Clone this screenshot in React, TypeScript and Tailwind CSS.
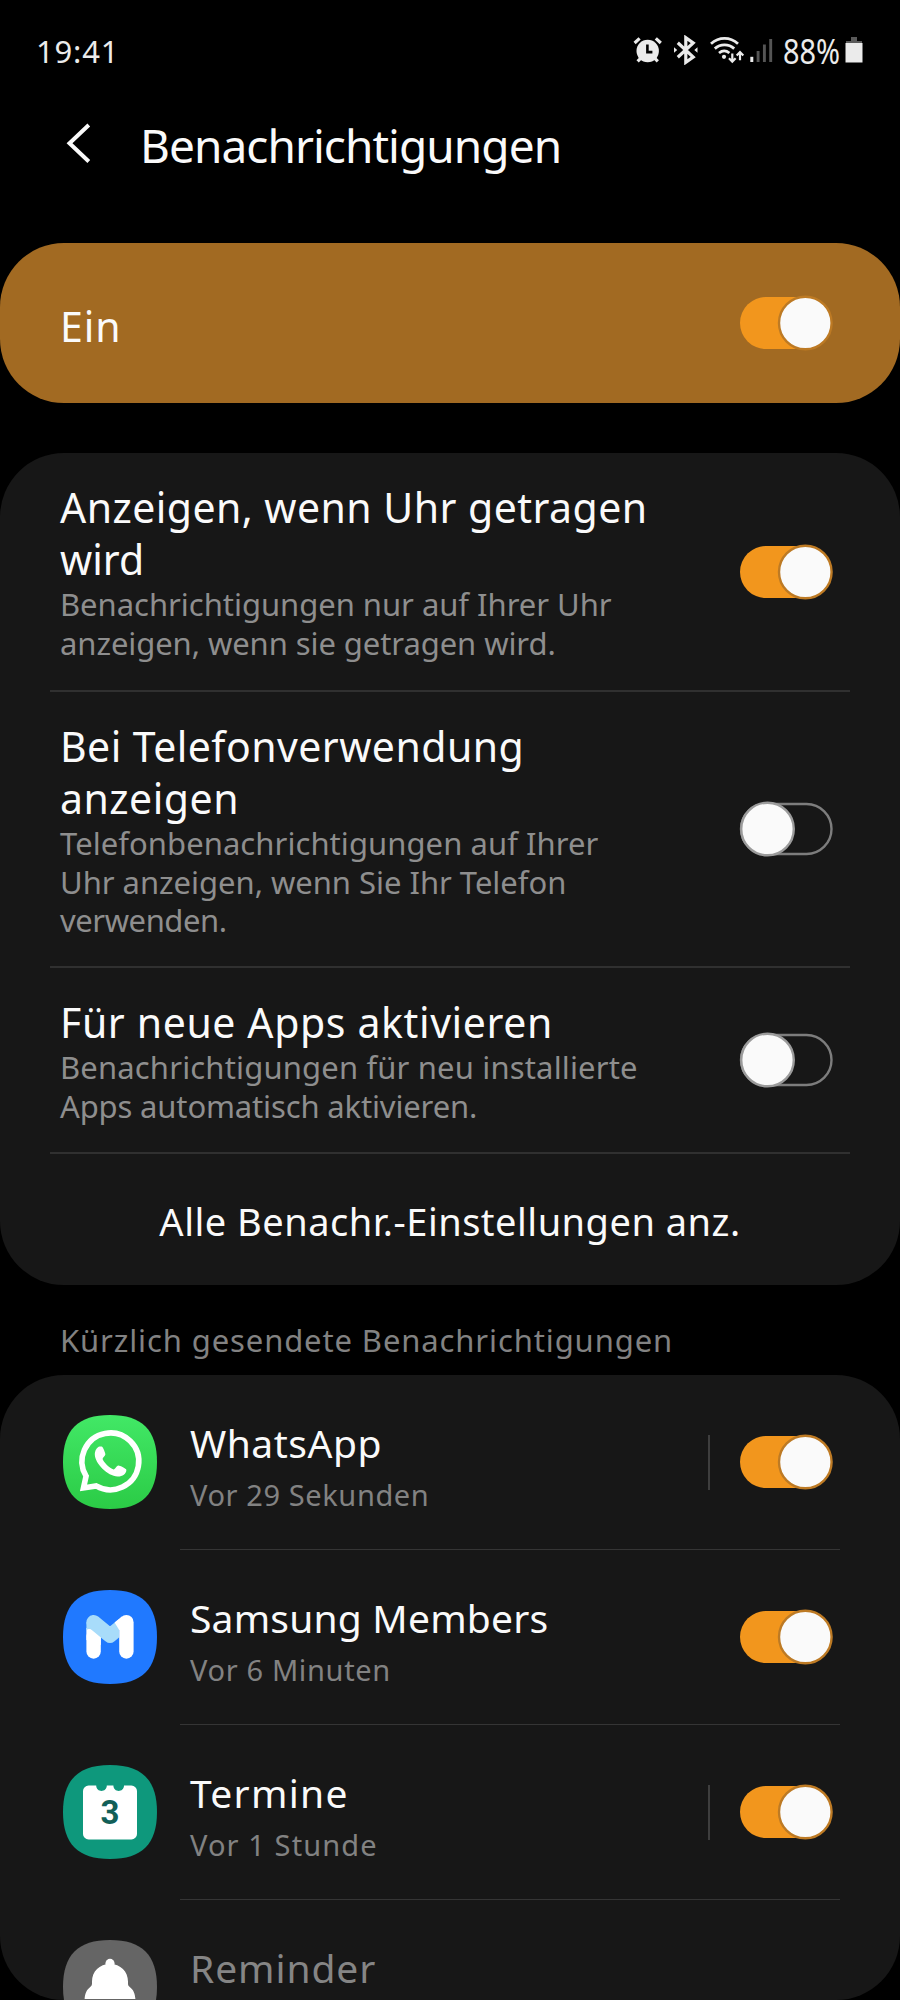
import type { ReactNode } from "react";

const SQUIRCLE = "M47 0C79 0 94 15 94 47S79 94 47 94 0 79 0 47 15 0 47 0Z";

function Toggle({ on }: { on: boolean }) {
  return (
    <svg viewBox="0 0 94 56" className="h-14 w-[94px] shrink-0" role="switch" aria-checked={on}>
      {on ? (
        <>
          <rect x="1" y="2" width="92" height="52" rx="26" fill="#f2961d" />
          <circle cx="66.3" cy="28" r="26.3" fill="#fafafa" stroke="#bd7a24" strokeWidth="2.4" />
        </>
      ) : (
        <>
          <rect x="2" y="3" width="90.500" height="50" rx="25" fill="none" stroke="#7d7d7d" strokeWidth="2.400" />
          <circle cx="28.5" cy="28" r="26.3" fill="#fafafa" stroke="#9b9b9b" strokeWidth="2.4" />
        </>
      )}
    </svg>
  );
}

function StatusIcons() {
  return (
    <svg viewBox="0 0 142 30" className="h-[30px] w-[142px]" fill="none" stroke="#ebebeb">
      <circle cx="15.7" cy="16" r="11.2" fill="#ebebeb" stroke="none" />
      <path d="M2.6 8L7.6 3.4M23.8 3.4l5 4.6M5.6 26.4l4-4M25.8 26.4l-4-4" strokeWidth="3.2" />
      <path d="M15.4 9.5v7.6h5" stroke="#000" strokeWidth="2.6" />
      <path d="M45.8 7.8L61.2 22l-7.4 5.3V2.7L61.2 8 45.8 22.2" strokeWidth="3.2" />
      <path d="M42 12.2l3.2 2.8-3.2 2.8zM65.500 12.2L62.3 15l3.2 2.8z" fill="#ebebeb" stroke="none" />
      <path d="M79 8.8C87 1.6 98 1.6 106 8.8M82.8 13.6c5.6-5 13.8-5 19.4 0M87 18c3.2-2.6 7.2-2.6 10.4 0" strokeWidth="2.8" />
      <circle cx="92" cy="21.8" r="2.1" fill="#ebebeb" stroke="none" />
      <path d="M100.3 18.6v8M97 23.2l3.3 3.5 3.3-3.5M108 25.2v-8M104.7 20.6l3.3-3.5 3.3 3.5" strokeWidth="2.2" />
      <path d="M119.8 27v-5.2" strokeWidth="3" />
      <path d="M126.1 27V16M132.4 27V9.4M138.7 27V4" stroke="#555" strokeWidth="2.9" />
    </svg>
  );
}

function WhatsAppIcon() {
  return (
    <svg viewBox="0 0 94 94" className="size-[94px]">
      <defs>
        <linearGradient id="wa" x1="0" y1="0" x2="0" y2="1">
          <stop offset="0" stopColor="#42e866" />
          <stop offset="1" stopColor="#2bcb46" />
        </linearGradient>
      </defs>
      <path d={SQUIRCLE} fill="url(#wa)" />
      <path d="M22.400 72.600L25 60.800A28.4 28.4 0 1 1 35 70.600Z" transform="translate(-1.900 .3)" fill="none" stroke="#fff" strokeWidth="5.6" />
      <path
        d="M36.6 31.6c-2.6.6-4.8 4-4.8 8C32 48.6 44.6 61.2 54.6 61.6c4.6.2 8.8-2.8 8.8-6.6 0-1.4-6.8-4.6-8.2-4.4-1.6.2-3.2 4-4.6 3.8C46.6 53.4 40.4 47 39.6 44c-.2-1.4 2.8-3.2 2.8-4.8-.2-1.6-2.2-6.4-3-7.2-.6-.6-1.8-.6-2.8-.4Z"
        fill="#fff"
      />
    </svg>
  );
}

function MembersIcon() {
  return (
    <svg viewBox="0 0 94 94" className="size-[94px]">
      <defs>
        <clipPath id="fold">
          <path d="M0 0h56v94H0z" />
        </clipPath>
      </defs>
      <path d={SQUIRCLE} fill="#2079ff" />
      <path d="M30.6 61.5V46" stroke="#fff" strokeWidth="14.4" strokeLinecap="round" />
      <path d="M23.4 50V38l7.5 1 6.9 8v8z" fill="#fff" />
      <path d="M23.4 32v8.4c1.2-1.6 4.4-2 7-.2L42 51z" fill="#a8dcfa" />
      <path d="M30.6 32.2L47 45.6l16.4-13.4" clipPath="url(#fold)" fill="none" stroke="#a8dcfa" strokeWidth="14.4" strokeLinecap="round" strokeLinejoin="round" />
      <path d="M63.4 61.5V32.2" stroke="#fff" strokeWidth="14.4" strokeLinecap="round" />
      <path d="M51.6 32.4l7.2-5.8L62 40h-5.8z" fill="#fff" />
    </svg>
  );
}

function CalendarIcon() {
  return (
    <svg viewBox="0 0 94 94" className="size-[94px]">
      <path d={SQUIRCLE} fill="#0e987c" />
      <path
        d="M25.6 20.5h7.6c0 7.2 10.6 7.2 10.6 0h6.6c0 7.2 10.6 7.2 10.6 0h7.4a5.6 5.6 0 0 1 5.6 5.6v42.8a5.6 5.6 0 0 1-5.6 5.6H25.6a5.6 5.6 0 0 1-5.6-5.6V26.1a5.6 5.6 0 0 1 5.6-5.6Z"
        fill="#fff"
      />
      <text x="47" y="59" textAnchor="middle" className="font-['Roboto'] text-[33px] font-bold" fill="#125f58">
        3
      </text>
    </svg>
  );
}

function ReminderIcon() {
  return (
    <svg viewBox="0 0 94 94" className="size-[94px]">
      <path d={SQUIRCLE} fill="#656565" />
      <circle cx="47" cy="23.400" r="4.600" fill="#fff" />
      <path d="M47 24c10.500 0 18 7.500 18 17.500 0 3-.2 4 2 5.700 3 2.200 5 5.800 5.400 11.800H21.600c.4-6 2.400-9.600 5.400-11.800 2.200-1.700 2-2.700 2-5.700C29 31.500 36.500 24 47 24Z" fill="#fff" />
    </svg>
  );
}

function Setting({ title, text, height }: { title: ReactNode; text: ReactNode; height: string }) {
  return (
    <div className={`${height} pt-7 whitespace-nowrap`}>
      <h2 className="text-[41px] leading-[52px] text-[#fafafa]">{title}</h2>
      <p className="text-[31px] leading-[38.5px] text-[#8e8e8e]">{text}</p>
    </div>
  );
}

function SettingRow({ children, on }: { children: ReactNode; on: boolean }) {
  return (
    <div className="mx-[50px] flex items-center justify-between border-b-2 border-[#303030] pr-[17px] pl-2.5">
      {children}
      <Toggle on={on} />
    </div>
  );
}

function AppRow({ icon, title, sub, on, split, dim }: { icon: ReactNode; title: ReactNode; sub?: ReactNode; on?: boolean; split?: boolean; dim?: boolean }) {
  return (
    <div className="flex h-[175px] shrink-0 pl-[63px]">
      <div className="mt-[39.500px] shrink-0">{icon}</div>
      <div className="mr-[60px] ml-[23px] flex flex-1 items-center justify-between border-b border-[#353535] pr-[7px] pl-2.5">
        <div className="self-start pt-[42px] whitespace-nowrap">
          <h2 className={dim ? "text-[39px] leading-[52px] text-[#858585]" : "text-[39px] leading-[52px] text-[#fafafa]"}>{title}</h2>
          <p className="mt-[7px] text-[29px] leading-[38px] text-[#828282]">{sub}</p>
        </div>
        {on && (
          <div className="flex items-center gap-[29px]">
            {split && <div className="h-[55px] w-0.5 bg-[#3e3e3e]" />}
            <Toggle on />
          </div>
        )}
      </div>
    </div>
  );
}

export default function App() {
  return (
    <div className="flex h-[2000px] w-[900px] flex-col overflow-hidden bg-black font-['Noto_Sans',sans-serif] text-[#fafafa]">
      <header className="flex h-[114px] shrink-0 items-start justify-between pr-[37px] pl-9">
        <span className="mt-[32px] text-[31px] leading-[38px] tracking-[0.8px] text-[#ebebeb]">19:41</span>
        <div className="mt-[35px] flex h-[30px]">
          <StatusIcons />
          <span className="ml-[9px] w-[62px] origin-left scale-x-[0.85] pt-px text-[34px] leading-[30px] text-[#ebebeb]">88%</span>
          <svg viewBox="0 0 18 30" className="h-[30px] w-[18px]">
            <path d="M6 2h6v4h5v2H1V6h5z" fill="#5a5a5a" />
            <path d="M.5 8h17v19.5H.5z" fill="#ebebeb" />
          </svg>
        </div>
      </header>

      <div className="flex h-[129px] shrink-0 items-start pl-[66px]">
        <svg viewBox="0 0 25 42" className="mt-[8px] h-[42px] w-[25px]" fill="none" stroke="#fafafa" strokeWidth="4">
          <path d="M22.8 3L3.500 21.300l19.300 18.200" />
        </svg>
        <h1 className="mt-px ml-[49px] text-[46px] leading-[60px] tracking-[-0.95px]">Benachrichtigungen</h1>
      </div>

      <section className="flex h-40 shrink-0 items-center justify-between rounded-[64px] bg-[#a26a22] pr-[67px] pl-[60px]">
        <h2 className="mt-1.5 text-[41px] leading-[52px] tracking-[1px]">Ein</h2>
        <Toggle on />
      </section>

      <section className="mt-[50px] h-[832px] shrink-0 rounded-[64px] bg-[#171717]">
        <SettingRow on>
          <Setting
            height="h-[237px]"
            title={<><span className="tracking-[0.45px]">Anzeigen, wenn Uhr getragen</span><br /><span>wird</span></>}
            text={<><span className="tracking-[-0.03px]">Benachrichtigungen nur auf Ihrer Uhr</span><br /><span className="tracking-[-0.08px]">anzeigen, wenn sie getragen wird.</span></>}
          />
        </SettingRow>
        <SettingRow on={false}>
          <Setting
            height="h-[274px]"
            title={<><span className="tracking-[0.45px]">Bei Telefonverwendung</span><br /><span className="tracking-[0.5px]">anzeigen</span></>}
            text={<><span className="tracking-[0.06px]">Telefonbenachrichtigungen auf Ihrer</span><br /><span className="tracking-[-0.03px]">Uhr anzeigen, wenn Sie Ihr Telefon</span><br /><span className="tracking-[-0.45px]">verwenden.</span></>}
          />
        </SettingRow>
        <SettingRow on={false}>
          <Setting
            height="h-[184px]"
            title={<span className="tracking-[0.62px]">Für neue Apps aktivieren</span>}
            text={<><span className="tracking-[0.16px]">Benachrichtigungen für neu installierte</span><br /><span className="tracking-[-0.15px]">Apps automatisch aktivieren.</span></>}
          />
        </SettingRow>
        <div className="flex h-[131px] items-center justify-center pt-1 text-[38px] tracking-[0.5px]">Alle Benachr.-Einstellungen anz.</div>
      </section>

      <h3 className="mt-5 ml-[60px] h-[70px] shrink-0 text-[31px] leading-[70px] tracking-[0.88px] text-[#828282]">Kürzlich gesendete Benachrichtigungen</h3>

      <section className="flex h-[625px] shrink-0 flex-col overflow-hidden rounded-[64px] bg-[#171717]">
        <AppRow on split icon={<WhatsAppIcon />} title={<span className="tracking-[0.5px]">WhatsApp</span>} sub={<span className="tracking-[0.6px]">Vor 29 Sekunden</span>} />
        <AppRow on icon={<MembersIcon />} title={<span className="tracking-[0.2px]">Samsung Members</span>} sub={<span className="tracking-[0.65px]">Vor 6 Minuten</span>} />
        <AppRow on split icon={<CalendarIcon />} title={<span className="tracking-[1.3px]">Termine</span>} sub={<span className="tracking-[1.1px]">Vor 1 Stunde</span>} />
        <AppRow dim icon={<ReminderIcon />} title={<span className="tracking-[0.9px]">Reminder</span>} />
      </section>
    </div>
  );
}
